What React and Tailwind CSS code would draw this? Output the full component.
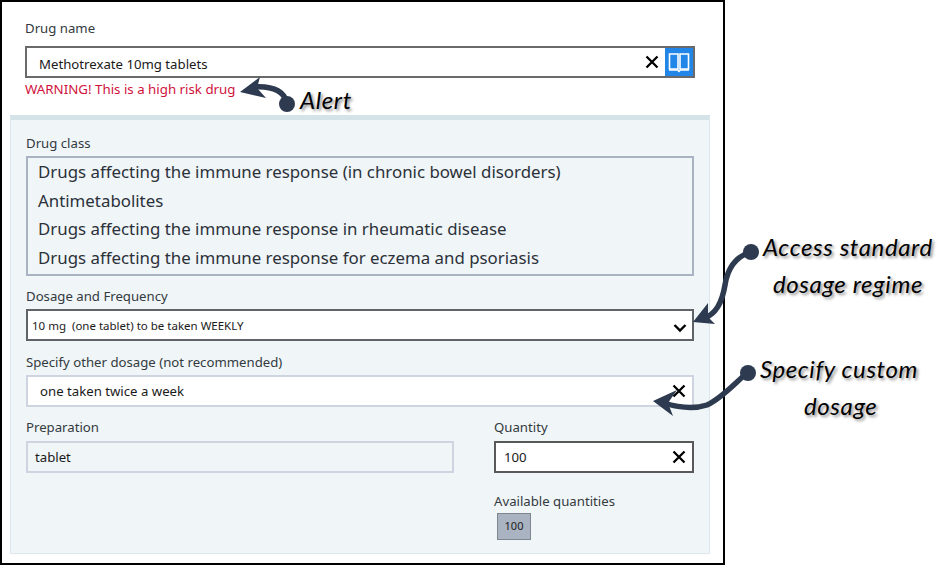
const X = ({ size = 14 }) => (
  <svg width={size} height={size} viewBox="0 0 14 14" className="block shrink-0">
    <path d="M1.5 1.5 L12.5 12.5 M12.5 1.5 L1.5 12.5" stroke="#000" strokeWidth="2.3" fill="none" />
  </svg>
);

const Label = ({ children, className = "" }) => (
  <div className={`text-[13.2px] leading-[18px] text-[#333a40] ${className}`}>{children}</div>
);

const Note = ({ children, className = "" }) => (
  <div
    className={`absolute whitespace-nowrap text-[24px] leading-[26px] tracking-[0.6px] text-black italic ${className}`}
    style={{ fontFamily: '"Lato","Noto Sans",sans-serif', textShadow: "2px 2px 3px rgba(0,0,0,0.45)" }}
  >
    {children}
  </div>
);

export default function App() {
  return (
    <div className="relative w-[947px] h-[565px] bg-white overflow-hidden" style={{ fontFamily: '"Noto Sans","Open Sans",sans-serif' }}>
      <div className="w-[725px] h-[565px] border-2 border-black bg-white pt-[17px] box-border">
        <div className="pl-[23px] pr-[28px]">
          <Label>Drug name</Label>
          <div className="mt-[9px] h-[32px] border-2 border-[#6a6a6a] bg-white flex items-center text-[13.2px] text-[#1a1a1a]">
            <div className="flex-1 pl-[12px] pt-[6px]">Methotrexate 10mg tablets</div>
            <div className="mr-[6px]"><X size={14} /></div>
            <div className="w-[28px] h-[28px] bg-[#2186e8] flex items-center justify-center">
              <svg width="22" height="22" viewBox="0 0 22 22" className="block">
                <path d="M1.5 3 H10 V18 H1.5 Z M12 3 H20.5 V18 H12 Z" fill="none" stroke="#fff" strokeWidth="1.6" />
                <path d="M1 19 H9.5 L11 20.5 L12.5 19 H21" fill="none" stroke="#fff" strokeWidth="1.4" />
              </svg>
            </div>
          </div>
          <div className="mt-[2px] text-[13.3px] leading-[18px] text-[#d0113c]">WARNING! This is a high risk drug</div>
        </div>

        <div className="ml-[8px] mt-[17px] w-[700px] h-[439px] box-border border border-[#dde8ee] border-t-[5px] border-t-[#d3e3e8] bg-[#f0f5f8] pl-[15px] pr-[15px] pt-[14px]">
          <Label>Drug class</Label>
          <div className="mt-[4px] h-[120px] box-border border-2 border-[#a9b3c1] pl-[10px] text-[16.85px] leading-[28.7px] text-[#2b3138]">
            <div>Drugs affecting the immune response (in chronic bowel disorders)</div>
            <div>Antimetabolites</div>
            <div>Drugs affecting the immune response in rheumatic disease</div>
            <div>Drugs affecting the immune response for eczema and psoriasis</div>
          </div>

          <Label className="mt-[11px]">Dosage and Frequency</Label>
          <div className="mt-[4px] h-[32px] box-border border-2 border-[#606469] bg-white flex items-center pl-[4px] pr-[5px] text-[11.5px] text-[#1a1a1a]">
            <div className="flex-1 whitespace-pre pt-[2px]">10 mg  (one tablet) to be taken WEEKLY</div>
            <svg width="14" height="10" viewBox="0 0 14 10" className="block mt-[6px]">
              <path d="M1.5 2 L7 7.5 L12.5 2" fill="none" stroke="#000" strokeWidth="2.4" />
            </svg>
          </div>

          <Label className="mt-[12px]">Specify other dosage (not recommended)</Label>
          <div className="mt-[4px] h-[32px] box-border border-2 border-[#ced4e0] bg-white flex items-center pl-[12px] pr-[6px] text-[13.2px] text-[#1a1a1a]">
            <div className="flex-1 pt-[2px]">one taken twice a week</div>
            <X size={14} />
          </div>

          <div className="mt-[11px] flex">
            <div className="w-[428px]">
              <Label>Preparation</Label>
              <div className="mt-[5px] h-[32px] box-border border-2 border-[#ced4e0] flex items-center pl-[7px] text-[13.2px] text-[#1a1a1a]">
                <div className="pt-[2px]">tablet</div>
              </div>
            </div>
            <div className="ml-[40px] w-[200px]">
              <Label>Quantity</Label>
              <div className="mt-[5px] h-[32px] box-border border-2 border-[#595959] bg-white flex items-center pl-[8px] pr-[6px] text-[13.2px] text-[#1a1a1a]">
                <div className="flex-1 pt-[2px]">100</div>
                <X size={14} />
              </div>
              <Label className="mt-[19px]">Available quantities</Label>
              <div className="ml-[3px] mt-[3px] w-[34px] h-[27px] box-border border border-[#808690] bg-[#a9b3c1] flex items-center justify-center text-[11px] text-[#222]">100</div>
            </div>
          </div>
        </div>
      </div>

      <svg className="absolute left-0 top-0 pointer-events-none" width="947" height="565" viewBox="0 0 947 565">
        <g fill="none" stroke="#2d3a4f" strokeWidth="5.5" strokeLinecap="round">
          <path d="M287 103 C284 91 272 86 254 87" />
          <path d="M750 252 C733 258 727 272 725 285 C722 303 716 314 703 319" />
          <path d="M747 373 C735 383 722 398 707 405 C695 409 680 408 664 403" />
        </g>
        <g fill="#2d3a4f">
          <circle cx="287" cy="104" r="8" />
          <circle cx="751" cy="252" r="8" />
          <circle cx="748" cy="373" r="8" />
          <path d="M240 92 L260 77 L257 88 L266 98 Z" />
          <path d="M693 322 L708 303 L708 317 L715 324 Z" />
          <path d="M653 401 L677 390 L668 403 L673 416 Z" />
        </g>
      </svg>

      <Note className="left-[300px] top-[87px]">Alert</Note>
      <Note className="left-[763px] top-[234px]">Access standard</Note>
      <Note className="left-[773px] top-[271px]">dosage regime</Note>
      <Note className="left-[760px] top-[356px]">Specify custom</Note>
      <Note className="left-[804px] top-[393px]">dosage</Note>
    </div>
  );
}
